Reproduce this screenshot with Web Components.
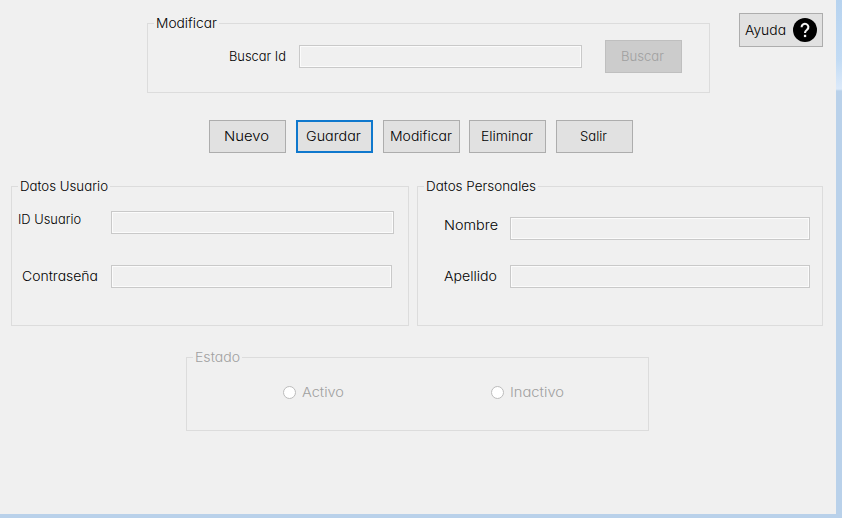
<!DOCTYPE html>
<html lang="es">
<head>
<meta charset="utf-8">
<title>Usuarios</title>
<style>
html,body{margin:0;height:518px;overflow:hidden;background:#f0f0f0}
</style>
</head>
<body>
<user-form></user-form>
<script>
const FONT = '"Century Gothic","Inter","Lato",sans-serif';

// Text run stretched horizontally to fill the given width.
class UiText extends HTMLElement {
  connectedCallback() {
    const root = this.attachShadow({mode:'open'});
    root.innerHTML = `<style>:host{display:block;flex:none;white-space:nowrap;line-height:16px}
      span{display:inline-block;transform-origin:0 50%}</style><span><slot></slot></span>`;
    const w = +this.getAttribute('w');
    this.style.width = w + 'px';
    const s = root.querySelector('span');
    s.style.transform = `scaleX(${w / s.getBoundingClientRect().width})`;
  }
}

class UiField extends HTMLElement {
  connectedCallback() {
    this.attachShadow({mode:'open'}).innerHTML = `<style>
      :host{display:block;flex:none;box-sizing:border-box;height:23px;border:1px solid #c9c9c9;box-shadow:inset 0 0 0 1px #fbfbfb;background:#f0f0f0}</style>`;
    this.style.width = this.getAttribute('w') + 'px';
  }
}

class UiButton extends HTMLElement {
  connectedCallback() {
    this.attachShadow({mode:'open'}).innerHTML = `<style>
      :host{display:flex;flex:none;box-sizing:border-box;width:77px;height:33px;padding:0 2px 1px 0;align-items:center;justify-content:center;background:#e1e1e1;border:1px solid #adadad}
      :host([focused]){border:2px solid #0f78cd}
      :host([disabled]){background:#ccc;border-color:#bfbfbf;color:#a0a0a0}
      :host([help]){width:84px;height:34px;gap:7px;padding:0}</style><slot></slot>`;
  }
}

class HelpIcon extends HTMLElement {
  connectedCallback() {
    this.attachShadow({mode:'open'}).innerHTML = `<style>:host{display:block;flex:none;width:24px;height:24px}svg{display:block}</style>
      <svg width="24" height="24" viewBox="0 0 24 24"><circle cx="12" cy="12" r="12"/>
      <path d="M8.6 9.2a3.4 3.3 0 1 1 5.5 2.5C12.8 12.7 12 13.1 12 15" fill="none" stroke="#f4f4f4" stroke-width="2.1"/>
      <rect x="10.9" y="16.8" width="2.3" height="2.3" fill="#f4f4f4"/></svg>`;
  }
}

class UiGroup extends HTMLElement {
  connectedCallback() {
    this.attachShadow({mode:'open'}).innerHTML = `<style>
      :host{display:block;flex:none;position:relative;box-sizing:border-box;border:1px solid #dcdcdc}
      :host([disabled]){color:#a0a0a0}
      .legend{position:absolute;top:-9px;left:6px;padding:0 2px;background:#f0f0f0}</style>
      <div class="legend"><slot name="legend"></slot></div><slot></slot>`;
  }
}

class UiRadio extends HTMLElement {
  connectedCallback() {
    this.attachShadow({mode:'open'}).innerHTML = `<style>
      :host{display:flex;flex:none;align-items:center;gap:6px}
      i{box-sizing:border-box;width:13px;height:13px;border:1px solid #bcbcbc;border-radius:50%;background:#fff}</style><i></i><slot></slot>`;
  }
}

class UserForm extends HTMLElement {
  connectedCallback() {
    this.attachShadow({mode:'open'}).innerHTML = `<style>
      :host{display:grid;grid-template:514px 4px / 836px 6px;width:842px;height:518px;background:#b9d1ea;font:300 13px ${FONT};font-feature-settings:"cv11";color:#000}
      main{background:#f0f0f0;overflow:hidden}
      .edge{background:linear-gradient(#b7d3ef,#c2dbf4 60px,#dceafa 89px,#b9d1ea 91px)}
      .row{display:flex;align-items:flex-start}
      .top{padding:13px 0 0 147px;gap:29px;height:107px;box-sizing:border-box}
      .search{width:563px;height:70px;margin-top:10px}
      .search .row{padding:16px 0 0 81px}
      .actions{padding-left:209px;gap:10px;height:33px;margin-top:13px}
      .data{padding-left:11px;gap:8px;margin-top:33px}
      .user{width:398px;height:140px}.person{width:406px;height:140px}
      .state{width:463px;height:74px;margin:31px 0 0 186px}
      .state .row{padding:26px 0 0 96px}
    </style>
    <main>
      <div class="row top">
        <ui-group class="search"><ui-text slot="legend" w="61">Modificar</ui-text>
          <div class="row"><ui-text w="57" style="margin-top:8px">Buscar Id</ui-text><ui-field w="283" style="margin:5px 23px 0 13px"></ui-field><ui-button disabled><ui-text w="43">Buscar</ui-text></ui-button></div>
        </ui-group>
        <ui-button help><ui-text w="41">Ayuda</ui-text><help-icon></help-icon></ui-button>
      </div>
      <div class="row actions">
        <ui-button><ui-text w="45">Nuevo</ui-text></ui-button>
        <ui-button focused><ui-text w="55">Guardar</ui-text></ui-button>
        <ui-button><ui-text w="62">Modificar</ui-text></ui-button>
        <ui-button style="margin-left:-1px"><ui-text w="52">Eliminar</ui-text></ui-button>
        <ui-button><ui-text w="27">Salir</ui-text></ui-button>
      </div>
      <div class="row data">
        <ui-group class="user"><ui-text slot="legend" w="88">Datos Usuario</ui-text>
          <div class="row" style="padding:24px 0 0 6px"><ui-text w="63">ID Usuario</ui-text><ui-field w="283" style="margin-left:30px"></ui-field></div>
          <div class="row" style="padding:31px 0 0 10px"><ui-text w="76" style="margin-top:3px">Contraseña</ui-text><ui-field w="281" style="margin-left:13px"></ui-field></div>
        </ui-group>
        <ui-group class="person"><ui-text slot="legend" w="110">Datos Personales</ui-text>
          <div class="row" style="padding:30px 0 0 26px"><ui-text w="54">Nombre</ui-text><ui-field w="300" style="margin-left:12px"></ui-field></div>
          <div class="row" style="padding:25px 0 0 26px"><ui-text w="53" style="margin-top:3px">Apellido</ui-text><ui-field w="300" style="margin-left:13px"></ui-field></div>
        </ui-group>
      </div>
      <ui-group class="state" disabled><ui-text slot="legend" w="45">Estado</ui-text>
        <div class="row"><ui-radio style="width:208px"><ui-text w="42">Activo</ui-text></ui-radio><ui-radio><ui-text w="54">Inactivo</ui-text></ui-radio></div>
      </ui-group>
    </main><div class="edge" style="height:514px"></div>`;
  }
}

customElements.define('ui-text', UiText);
customElements.define('ui-field', UiField);
customElements.define('ui-button', UiButton);
customElements.define('help-icon', HelpIcon);
customElements.define('ui-group', UiGroup);
customElements.define('ui-radio', UiRadio);
customElements.define('user-form', UserForm);
</script>
</body>
</html>
